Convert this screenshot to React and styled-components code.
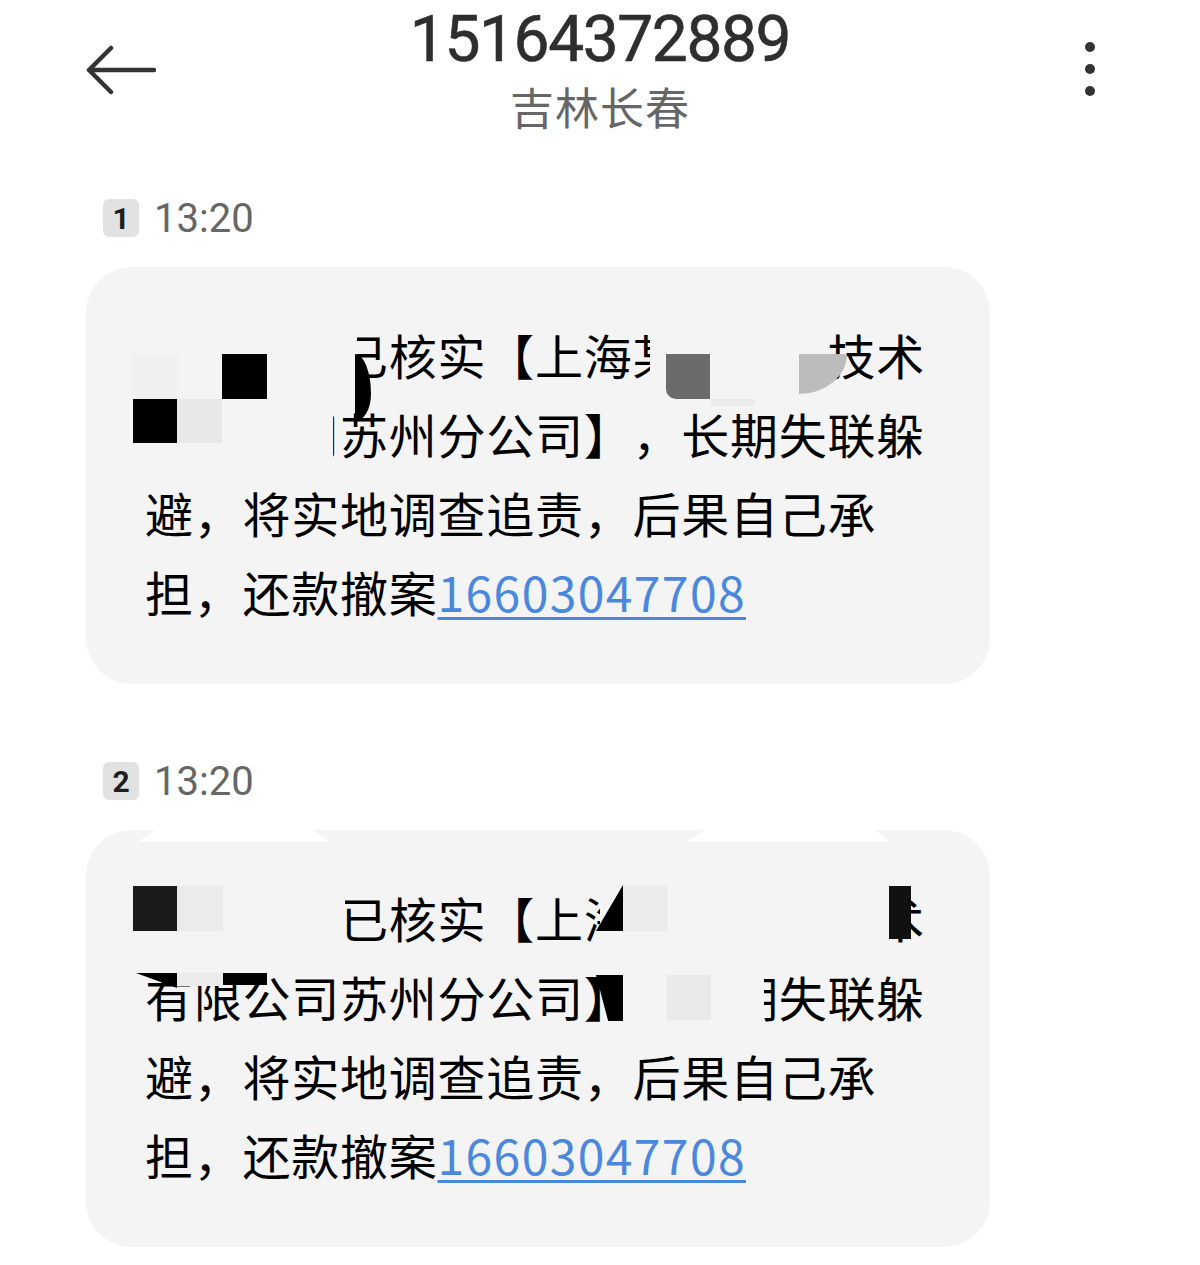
import React from "react";
import styled, { createGlobalStyle } from "styled-components";

const GlobalStyle = createGlobalStyle`
  html, body {
    margin: 0;
    padding: 0;
    background: #ffffff;
  }
  body {
    font-family: "Noto Sans CJK SC", "Noto Sans", sans-serif;
    color: #000;
  }
`;

// redaction overlays, coordinates relative to the bubble box
const bubbleOneMask = [
  { x: 47, y: 62, w: 224, h: 62, c: "#f4f4f4" },
  { x: 564, y: 62, w: 150, h: 62, c: "#f4f4f4" },
  { x: 47, y: 137, w: 200, h: 65, c: "#f4f4f4" },
  { x: 47, y: 87, w: 44, h: 45, c: "#f0f0f0" },
  { x: 136, y: 87, w: 45, h: 45, c: "#000" },
  { x: 47, y: 132, w: 44, h: 44, c: "#000" },
  { x: 91, y: 132, w: 45, h: 44, c: "#e8e8e8" },
  { x: 269, y: 87, w: 16, h: 67, c: "#000", r: "0 100% 100% 0 / 0 60% 40% 0" },
  { x: 580, y: 87, w: 44, h: 45, c: "#6b6b6b", r: "0 0 0 10px" },
  { x: 713, y: 87, w: 48, h: 40, c: "#bcbcbc", r: "0 0 100% 0" },
  { x: 625, y: 132, w: 44, h: 7, c: "#ececec" },
];

const bubbleTwoMask = [
  { x: 52, y: 0, w: 192, h: 12, c: "#fff", clip: "polygon(9% 0, 91% 0, 100% 100%, 0 100%)" },
  { x: 600, y: 0, w: 205, h: 12, c: "#fff", clip: "polygon(9% 0, 92% 0, 100% 100%, 0 100%)" },
  { x: 47, y: 53, w: 212, h: 65, c: "#f4f4f4" },
  { x: 514, y: 53, w: 289, h: 65, c: "#f4f4f4" },
  { x: 47, y: 56, w: 44, h: 45, c: "#1a1a1a" },
  { x: 91, y: 56, w: 46, h: 45, c: "#ebebeb" },
  { x: 510, y: 55, w: 27, h: 46, c: "#000", clip: "polygon(100% 0, 100% 100%, 0 100%)" },
  { x: 537, y: 56, w: 44, h: 45, c: "#ebebeb" },
  { x: 803, y: 56, w: 22, h: 53, c: "#111" },
  { x: 537, y: 138, w: 141, h: 62, c: "#f4f4f4" },
  { x: 50, y: 143, w: 41, h: 15, c: "#000", clip: "polygon(0 0, 100% 0, 100% 100%)" },
  { x: 91, y: 143, w: 46, h: 13, c: "#ebebeb" },
  { x: 137, y: 143, w: 44, h: 12, c: "#000" },
  { x: 510, y: 145, w: 27, h: 46, c: "#000", clip: "polygon(0 0, 100% 0, 100% 100%, 45% 100%)" },
  { x: 581, y: 145, w: 44, h: 45, c: "#e9e9e9" },
];

const messages = [
  {
    index: 1,
    time: "13:20",
    lines: [
      "　　　　已核实【上海某　　　技术",
      "有限公司苏州分公司】，长期失联躲",
      "避，将实地调查追责，后果自己承",
    ],
    mask: bubbleOneMask,
  },
  {
    index: 2,
    time: "13:20",
    lines: [
      "　　　　已核实【上海　　　　　术",
      "有限公司苏州分公司】，　期失联躲",
      "避，将实地调查追责，后果自己承",
    ],
    mask: bubbleTwoMask,
  },
];

const Page = styled.div`
  width: 1200px;
  min-height: 1265px;
  background: #fff;
`;

const Header = styled.header`
  display: grid;
  grid-template-columns: 1fr auto 1fr;
  align-items: start;
  padding-top: 4px;
`;

const BackButton = styled.button`
  justify-self: start;
  margin: 41px 0 0 84px;
  padding: 0;
  border: none;
  background: none;
  display: flex;
`;

const TitleBlock = styled.div`
  display: flex;
  flex-direction: column;
  align-items: center;
`;

const Number = styled.h1`
  margin: 0;
  font-family: Roboto, "Liberation Sans", sans-serif;
  font-size: 64px;
  font-weight: 400;
  line-height: 72px;
  letter-spacing: -1.4px;
  color: #2e2e2e;
  -webkit-text-stroke: 0.6px #2e2e2e;
`;

const Region = styled.div`
  margin-top: 5px;
  font-size: 44px;
  line-height: 50px;
  letter-spacing: 1px;
  color: #666;
`;

const MoreButton = styled.button`
  justify-self: end;
  margin: 38px 105px 0 0;
  padding: 0;
  border: none;
  background: none;
  display: flex;
  flex-direction: column;
  gap: 12px;
`;

const Dot = styled.span`
  width: 10px;
  height: 10px;
  border-radius: 50%;
  background: #333;
`;

const Thread = styled.main`
  display: flex;
  flex-direction: column;
  gap: 78px;
  margin-top: 68px;
  padding-left: 86px;
`;

const Group = styled.section`
  display: flex;
  flex-direction: column;
  gap: 30px;
`;

const Meta = styled.div`
  display: flex;
  align-items: center;
  gap: 15px;
  padding-left: 17px;
  height: 38px;
`;

const Badge = styled.span`
  width: 36px;
  height: 38px;
  border-radius: 6px;
  background: #e2e2e2;
  color: #1e1e1e;
  display: flex;
  align-items: center;
  justify-content: center;
  font-family: Roboto, "Liberation Sans", sans-serif;
  font-weight: 700;
  font-size: 30px;
`;

const Time = styled.span`
  font-family: Roboto, "Liberation Sans", sans-serif;
  font-size: 40px;
  color: #666;
`;

const Bubble = styled.div`
  position: relative;
  width: 904px;
  box-sizing: border-box;
  padding: 48px 0 53px 59px;
  border-radius: 46px;
  background: #f4f4f4;
`;

const Line = styled.div`
  font-size: 48px;
  line-height: 79px;
  letter-spacing: 0.75px;
  white-space: nowrap;
  text-spacing-trim: space-all;
  color: #000;
`;

const Link = styled.a`
  color: #4a88de;
  text-decoration: underline;
  text-decoration-thickness: 3px;
  text-underline-offset: 5px;
  letter-spacing: 1.4px;
`;

const Mask = styled.span`
  position: absolute;
  left: ${(p) => p.$x}px;
  top: ${(p) => p.$y}px;
  width: ${(p) => p.$w}px;
  height: ${(p) => p.$h}px;
  background: ${(p) => p.$c};
  border-radius: ${(p) => p.$r || "0"};
  clip-path: ${(p) => p.$clip || "none"};
`;

const BackArrow = () => (
  <svg width="72" height="50" viewBox="0 0 72 50" fill="none">
    <path
      d="M70 25H6M27 3L5 25l22 22"
      stroke="#333"
      strokeWidth="4.5"
      strokeLinecap="round"
      strokeLinejoin="round"
    />
  </svg>
);

export default function App() {
  return (
    <Page>
      <GlobalStyle />
      <Header>
        <BackButton aria-label="back">
          <BackArrow />
        </BackButton>
        <TitleBlock>
          <Number>15164372889</Number>
          <Region>吉林长春</Region>
        </TitleBlock>
        <MoreButton aria-label="more">
          <Dot />
          <Dot />
          <Dot />
        </MoreButton>
      </Header>
      <Thread>
        {messages.map((m) => (
          <Group key={m.index}>
            <Meta>
              <Badge>{m.index}</Badge>
              <Time>{m.time}</Time>
            </Meta>
            <Bubble>
              {m.lines.map((l, i) => (
                <Line key={i}>{l}</Line>
              ))}
              <Line>
                担，还款撤案<Link href="#">16603047708</Link>
              </Line>
              {m.mask.map((b, i) => (
                <Mask
                  key={i}
                  $x={b.x}
                  $y={b.y}
                  $w={b.w}
                  $h={b.h}
                  $c={b.c}
                  $r={b.r}
                  $clip={b.clip}
                />
              ))}
            </Bubble>
          </Group>
        ))}
      </Thread>
    </Page>
  );
}
